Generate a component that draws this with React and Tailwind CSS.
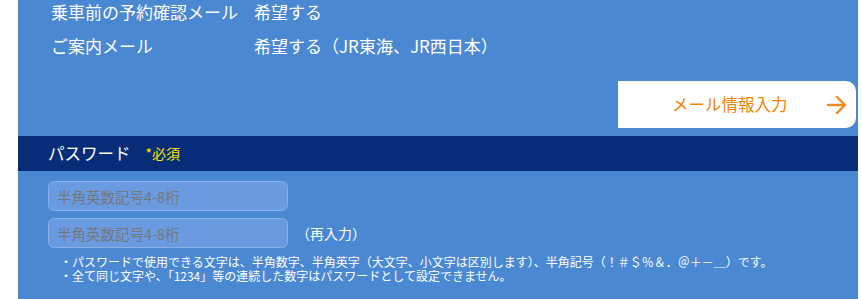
import { useState } from 'react';

const font = { fontFamily: '"Noto Sans CJK JP", "Noto Sans", sans-serif' };

const MailRow = ({ label, value }) => (
  <div className="flex h-[34px] items-center">
    <span className="w-[203px] shrink-0">{label}</span>
    <span>{value}</span>
  </div>
);

const PasswordInput = ({ value, onChange }) => (
  <input
    type="password"
    value={value}
    onChange={onChange}
    placeholder="半角英数記号4-8桁"
    className="h-[30px] w-[240px] rounded-md border border-[#88b0e6] bg-[#6a9be0] px-2 text-[14.5px] text-white placeholder:text-[#74777d] focus:outline-none"
  />
);

export default function App() {
  const [pw, setPw] = useState('');
  const [pw2, setPw2] = useState('');

  return (
    <div className="flex h-[299px] w-[862px] overflow-hidden bg-white pl-[18px] pr-[4px]" style={font}>
      <div className="flex w-[840px] flex-col bg-[#4a88d2] text-white">
        {/* Mail settings summary */}
        <div className="-mt-[5px] pl-[33px] text-[17px]">
          <MailRow label="乗車前の予約確認メール" value="希望する" />
          <MailRow label="ご案内メール" value="希望する（JR東海、JR西日本）" />
        </div>

        {/* Mail info button */}
        <div className="mt-[18px] flex justify-end pr-[2px]">
          <button className="flex h-[47px] w-[238px] items-center justify-between rounded-r-[10px] bg-white pl-[54px] pr-[8px] text-[16.5px] text-[#f08300]">
            <span>メール情報入力</span>
            <svg width="22" height="20" viewBox="0 0 22 20" fill="none" stroke="#f08a1c" strokeWidth="2.4" strokeLinecap="round" strokeLinejoin="round">
              <path d="M2 10h17M11 2l8 8-8 8" />
            </svg>
          </button>
        </div>

        {/* Password header */}
        <div className="mt-[8px] flex h-[35px] items-center gap-[15px] bg-[#082d78] pl-[30px]">
          <span className="text-[16.5px]">パスワード</span>
          <span className="text-[14px] text-[#ffe600]">*必須</span>
        </div>

        {/* Inputs */}
        <div className="mt-[10px] flex flex-col gap-[7px] pl-[30px]">
          <PasswordInput value={pw} onChange={(e) => setPw(e.target.value)} />
          <div className="flex items-center gap-[8px]">
            <PasswordInput value={pw2} onChange={(e) => setPw2(e.target.value)} />
            <span className="text-[14px]">（再入力）</span>
          </div>
        </div>

        {/* Notes */}
        <ul className="mt-[7px] pl-[42px] text-[12px] leading-[14px]">
          <li>・パスワードで使用できる文字は、半角数字、半角英字（大文字、小文字は区別します）、半角記号（！＃＄％＆．＠＋－＿）です。</li>
          <li>・全て同じ文字や、「1234」等の連続した数字はパスワードとして設定できません。</li>
        </ul>
      </div>
    </div>
  );
}
